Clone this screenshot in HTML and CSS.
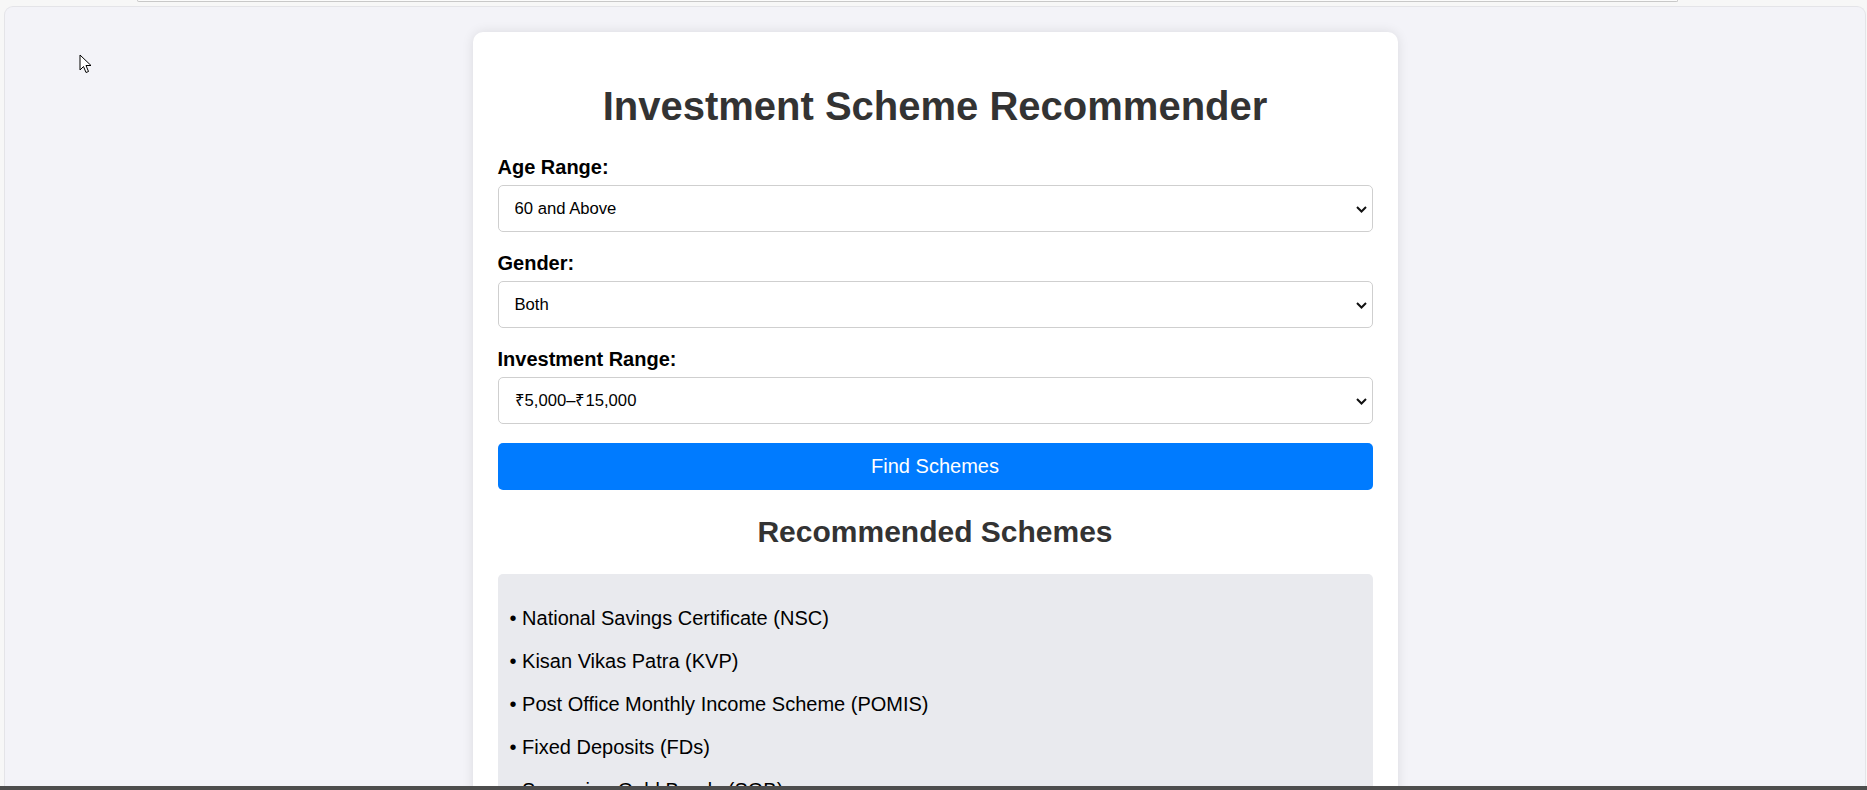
FILE: index.html
```html
<!DOCTYPE html>
<html lang="en">
<head>
<meta charset="utf-8">
<title>Investment Scheme Recommender</title>
<link rel="stylesheet" href="styles.css">
</head>
<body>
<div class="chrome-top"><div class="chrome-bar"></div></div>
<div class="frame">
  <div class="card">
    <h1 class="title">Investment Scheme Recommender</h1>
    <label class="field-label" for="age">Age Range:</label>
    <div class="select-wrap">
      <select id="age" class="field-select">
        <option>60 and Above</option>
      </select>
      <svg class="chevron" width="11" height="7" viewBox="0 0 11 7"><path d="M1 1 L5.5 5.5 L10 1" fill="none" stroke="#111" stroke-width="2"/></svg>
    </div>
    <label class="field-label" for="gender">Gender:</label>
    <div class="select-wrap">
      <select id="gender" class="field-select">
        <option>Both</option>
      </select>
      <svg class="chevron" width="11" height="7" viewBox="0 0 11 7"><path d="M1 1 L5.5 5.5 L10 1" fill="none" stroke="#111" stroke-width="2"/></svg>
    </div>
    <label class="field-label" for="inv">Investment Range:</label>
    <div class="select-wrap">
      <select id="inv" class="field-select">
        <option>₹5,000–₹15,000</option>
      </select>
      <svg class="chevron" width="11" height="7" viewBox="0 0 11 7"><path d="M1 1 L5.5 5.5 L10 1" fill="none" stroke="#111" stroke-width="2"/></svg>
    </div>
    <button class="find-btn" type="button">Find Schemes</button>
    <h2 class="subtitle">Recommended Schemes</h2>
    <div class="results">
      <p class="scheme">• National Savings Certificate (NSC)</p>
      <p class="scheme">• Kisan Vikas Patra (KVP)</p>
      <p class="scheme">• Post Office Monthly Income Scheme (POMIS)</p>
      <p class="scheme">• Fixed Deposits (FDs)</p>
      <p class="scheme">• Sovereign Gold Bonds (SGB)</p>
      <p class="scheme">• Senior Citizens Savings Scheme (SCSS)</p>
    </div>
  </div>
  <svg class="cursor" width="14" height="20" viewBox="0 0 14 20"><path d="M1 1 L1 16 L4.5 12.5 L7 18.5 L9.5 17.5 L7 11.5 L12 11.5 Z" fill="#fff" stroke="#000" stroke-width="1" stroke-linejoin="round"/></svg>
</div>
<div class="chrome-bottom"></div>
</body>
</html>
```
FILE: styles.css
```css
html, body {
  margin: 0;
  padding: 0;
  height: 790px;
  overflow: hidden;
}
body {
  background: #f7f7f7;
  font-family: "Liberation Sans", Arial, sans-serif;
  display: flex;
  flex-direction: column;
}
.chrome-top {
  height: 6px;
  flex: none;
}
.chrome-bar {
  margin-left: 137px;
  width: 1539px;
  height: 1px;
  background: #fbfbfb;
  border: 1px solid #c8c8c8;
  border-top: none;
  border-radius: 0 0 4px 4px;
}
.frame {
  position: relative;
  flex: 1;
  margin: 0 1px 0 4px;
  background: #f3f3f8;
  border: 1px solid #e4e4e8;
  border-bottom: none;
  border-radius: 9px 9px 0 0;
  overflow: hidden;
}
.card {
  width: 875px;
  margin: 25px auto 0;
  padding: 25px;
  background: #fff;
  border-radius: 10px;
  box-shadow: 0 0 12px rgba(0, 0, 0, 0.1);
}
.title {
  margin: 26px 0 26px;
  font-size: 40px;
  line-height: 46px;
  font-weight: bold;
  color: #333;
  text-align: center;
}
.field-label {
  display: block;
  padding-top: 1px;
  margin-bottom: 6px;
  font-size: 20px;
  line-height: 23px;
  font-weight: bold;
  color: #000;
}
.select-wrap {
  position: relative;
  margin-bottom: 19px;
}
.field-select {
  display: block;
  width: 100%;
  height: 47px;
  box-sizing: border-box;
  padding: 0 16px;
  margin: 0;
  font-family: "Liberation Sans", Arial, sans-serif;
  font-size: 16.67px;
  color: #000;
  background: #fff;
  border: 1px solid #cfcfcf;
  border-radius: 5px;
  appearance: none;
  -webkit-appearance: none;
}
.chevron {
  position: absolute;
  right: 6px;
  top: 21px;
  pointer-events: none;
}
.find-btn {
  display: block;
  width: 100%;
  height: 47px;
  margin: 2px 0 0;
  padding: 0;
  border: none;
  border-radius: 5px;
  background: #007bff;
  color: #fff;
  font-family: "Liberation Sans", Arial, sans-serif;
  font-size: 20px;
}
.subtitle {
  margin: 25px 0 25px;
  font-size: 30px;
  line-height: 34px;
  font-weight: bold;
  color: #333;
  text-align: center;
}
.results {
  padding: 13px 12px;
  background: #e9eaee;
  border-radius: 5px;
}
.scheme {
  margin: 20px 0;
  font-size: 20px;
  line-height: 23px;
  color: #000;
}
.cursor {
  position: absolute;
  left: 74px;
  top: 47px;
}
.chrome-bottom {
  height: 4px;
  flex: none;
  background: #4d4d4d;
}
```
